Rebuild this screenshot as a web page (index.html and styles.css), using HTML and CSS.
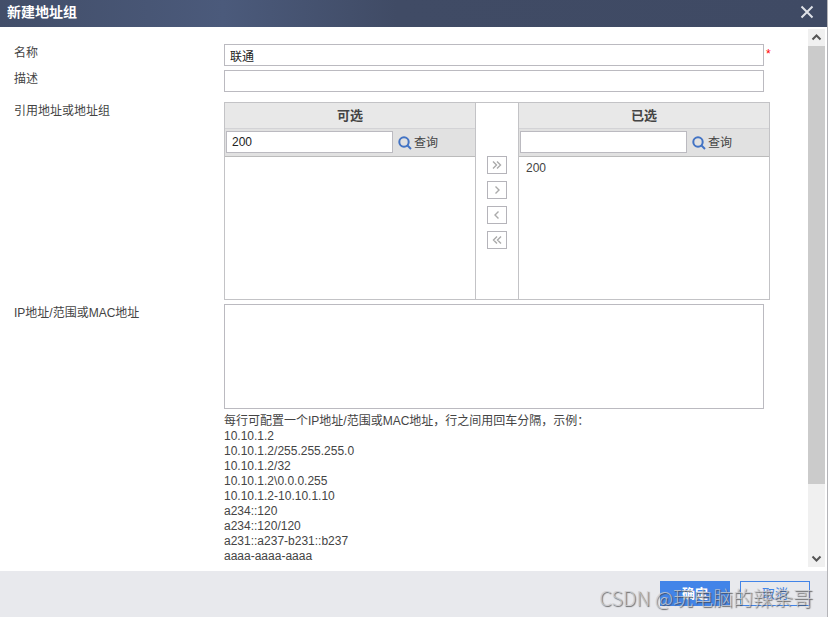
FILE: index.html
```html
<!DOCTYPE html>
<html lang="zh-CN">
  <head>
    <meta charset="UTF-8" />
    <meta name="viewport" content="width=device-width, initial-scale=1.0" />
    <title>新建地址组</title>
    <link rel="stylesheet" href="styles.css">
  </head>
  <body>
    <form class="dialog">
      <header class="dialog-header">
        <h1>新建地址组</h1>
        <button type="button" class="close" aria-label="关闭">
          <svg width="14" height="14" viewBox="0 0 14 14">
            <path d="M1.5 1.5l11 11M12.5 1.5l-11 11" />
          </svg>
        </button>
      </header>

      <div class="dialog-body">
        <div class="fields">
          <div class="row">
            <label for="name">名称</label>
            <div class="control">
              <input type="text" id="name" name="name" value="联通" required />
              <span class="required">*</span>
            </div>
          </div>
          <div class="row">
            <label for="description">描述</label>
            <div class="control">
              <input type="text" id="description" name="description" />
            </div>
          </div>
          <div class="row row-transfer">
            <span class="label">引用地址或地址组</span>
            <div class="transfer">
              <section class="panel">
                <h2>可选</h2>
                <div class="search">
                  <input type="text" value="200" aria-label="可选" />
                  <button type="button">
                    <svg width="14" height="14" viewBox="0 0 14 14">
                      <circle cx="6" cy="6" r="4.7" />
                      <path d="M9 9l4 4" />
                    </svg>
                    查询
                  </button>
                </div>
                <ul></ul>
              </section>
              <div class="moves">
                <button type="button" aria-label="全部添加">
                  <svg width="10" height="8" viewBox="0 0 10 8"><path d="M1 0.5L4.5 4L1 7.5M5 0.5L8.5 4L5 7.5" /></svg>
                </button>
                <button type="button" aria-label="添加">
                  <svg width="10" height="8" viewBox="0 0 10 8"><path d="M3.5 0.5L7 4L3.5 7.5" /></svg>
                </button>
                <button type="button" aria-label="移除">
                  <svg width="10" height="8" viewBox="0 0 10 8"><path d="M6.5 0.5L3 4L6.5 7.5" /></svg>
                </button>
                <button type="button" aria-label="全部移除">
                  <svg width="10" height="8" viewBox="0 0 10 8"><path d="M5 0.5L1.5 4L5 7.5M9 0.5L5.5 4L9 7.5" /></svg>
                </button>
              </div>
              <section class="panel">
                <h2>已选</h2>
                <div class="search">
                  <input type="text" aria-label="已选" />
                  <button type="button">
                    <svg width="14" height="14" viewBox="0 0 14 14">
                      <circle cx="6" cy="6" r="4.7" />
                      <path d="M9 9l4 4" />
                    </svg>
                    查询
                  </button>
                </div>
                <ul>
                  <li>200</li>
                </ul>
              </section>
            </div>
          </div>
          <div class="row">
            <label for="addresses">IP地址/范围或MAC地址</label>
            <div class="control">
              <textarea id="addresses" name="addresses"></textarea>
              <p class="hint">
                每行可配置一个IP地址/范围或MAC地址，行之间用回车分隔，示例：<br />
                10.10.1.2<br />
                10.10.1.2/255.255.255.0<br />
                10.10.1.2/32<br />
                10.10.1.2\0.0.0.255<br />
                10.10.1.2-10.10.1.10<br />
                a234::120<br />
                a234::120/120<br />
                a231::a237-b231::b237<br />
                aaaa-aaaa-aaaa
              </p>
            </div>
          </div>
        </div>

        <div class="scrollbar" aria-hidden="true">
          <svg width="17" height="17" viewBox="0 0 17 17"><path d="M4.5 10.5l4-4l4 4" /></svg>
          <div class="track"><div class="thumb"></div></div>
          <svg width="17" height="17" viewBox="0 0 17 17"><path d="M4.5 6.5l4 4l4-4" /></svg>
        </div>
      </div>

      <footer class="dialog-footer">
        <button type="submit" class="primary">确定</button>
        <button type="button">取消</button>
        <span class="watermark">CSDN @玩电脑的辣条哥</span>
      </footer>
    </form>
  </body>
</html>
```

FILE: styles.css
```css
* {
  box-sizing: border-box;
}

body {
  margin: 0;
  font-family: "Liberation Sans", "Noto Sans CJK SC", sans-serif;
  font-size: 12px;
  line-height: 16px;
  color: #444;
}

h1,
h2,
p,
ul {
  margin: 0;
  padding: 0;
}

input,
textarea,
button {
  font: inherit;
  color: inherit;
}

button {
  display: flex;
  align-items: center;
  justify-content: center;
  padding: 0;
  border: 0;
  background: none;
  cursor: pointer;
}

svg {
  display: block;
  fill: none;
}

.dialog {
  display: flex;
  flex-direction: column;
  min-height: 100vh;
  border-right: 1px solid #b4b4b8;
}

.dialog-header {
  display: flex;
  align-items: center;
  justify-content: space-between;
  height: 27px;
  padding: 0 13px 4px 7px;
  background: linear-gradient(90deg, #424e69, #4b5a7b 27%, #404b65 48%, #3f4a64);
  color: #fff;
}

.dialog-header h1 {
  font-size: 14px;
  line-height: 20px;
}

.close svg {
  stroke: #dfe2e8;
  stroke-width: 2;
}

.dialog-body {
  flex: 1;
  display: flex;
  padding: 2px 2px 4px 14px;
}

.fields {
  flex: 1;
  display: flex;
  flex-direction: column;
  gap: 4px;
  padding: 15px 38px 0 0;
}

.row {
  display: grid;
  grid-template-columns: 210px 1fr;
}

.row > label,
.row > .label {
  padding-top: 1px;
}

.row-transfer {
  margin-top: 6px;
}

.control {
  display: grid;
  grid-template-columns: 1fr 6px;
}

input,
textarea {
  width: 100%;
  min-width: 0;
  border: 1px solid #bbbac0;
  background: #fff;
  color: #222;
}

input {
  height: 22px;
  padding: 0 5px;
}

textarea {
  display: block;
  height: 105px;
  resize: none;
}

.required {
  padding: 2px 0 0 2px;
  color: #f00;
}

.transfer {
  display: grid;
  grid-template-columns: 1fr 42px 1fr;
  height: 198px;
  border: 1px solid #c3c3c6;
}

.panel:first-child {
  border-right: 1px solid #c3c3c6;
}

.panel:last-child {
  border-left: 1px solid #c3c3c6;
}

.panel h2 {
  height: 26px;
  border-bottom: 1px solid #d3d3d6;
  background: #e8e8e8;
  font-size: 13px;
  line-height: 26px;
  text-align: center;
}

.search {
  display: grid;
  grid-template-columns: 11fr 5fr;
  align-items: center;
  gap: 5px;
  height: 28px;
  padding: 0 1px 1px;
  border-bottom: 1px solid #bbb;
  background: #e1e1e1;
}

.search button {
  justify-self: start;
  gap: 2px;
  padding-top: 1px;
}

.search svg {
  stroke: #4273c4;
  stroke-width: 2;
}

.panel ul {
  padding: 3px 7px;
  list-style: none;
}

.moves {
  display: flex;
  flex-direction: column;
  align-items: center;
  gap: 7px;
  padding-top: 53px;
}

.moves button {
  width: 20px;
  height: 18px;
  border: 1px solid #b5b4ba;
}

.moves svg {
  stroke: #aaa;
  stroke-width: 1.4;
}

.hint {
  grid-column: 1 / -1;
  padding-top: 5px;
  line-height: 15px;
}

.scrollbar {
  display: flex;
  flex-direction: column;
  width: 17px;
  background: #f0f0f0;
}

.scrollbar svg {
  stroke: #555;
  stroke-width: 2;
}

.track {
  flex: 1;
}

.thumb {
  height: 87%;
  background: #cbcbcb;
}

.dialog-footer {
  position: relative;
  display: flex;
  justify-content: flex-end;
  gap: 10px;
  padding: 10px 17px 11px;
  background: #e8e9ed;
}

.dialog-footer button {
  width: 70px;
  height: 25px;
  border: 1px solid #4284e8;
  color: #4284e8;
  font-size: 13px;
}

.dialog-footer .primary {
  background: #4284e8;
  color: #fff;
  font-weight: bold;
}

.watermark {
  position: absolute;
  right: 14px;
  bottom: 6px;
  color: rgba(205, 205, 208, 0.8);
  font-family: "Noto Sans CJK SC", sans-serif;
  font-size: 20px;
  font-weight: 300;
  line-height: 26px;
  text-shadow: 1px 1px 1px rgba(70, 70, 70, 0.8);
  white-space: nowrap;
  pointer-events: none;
}
```
